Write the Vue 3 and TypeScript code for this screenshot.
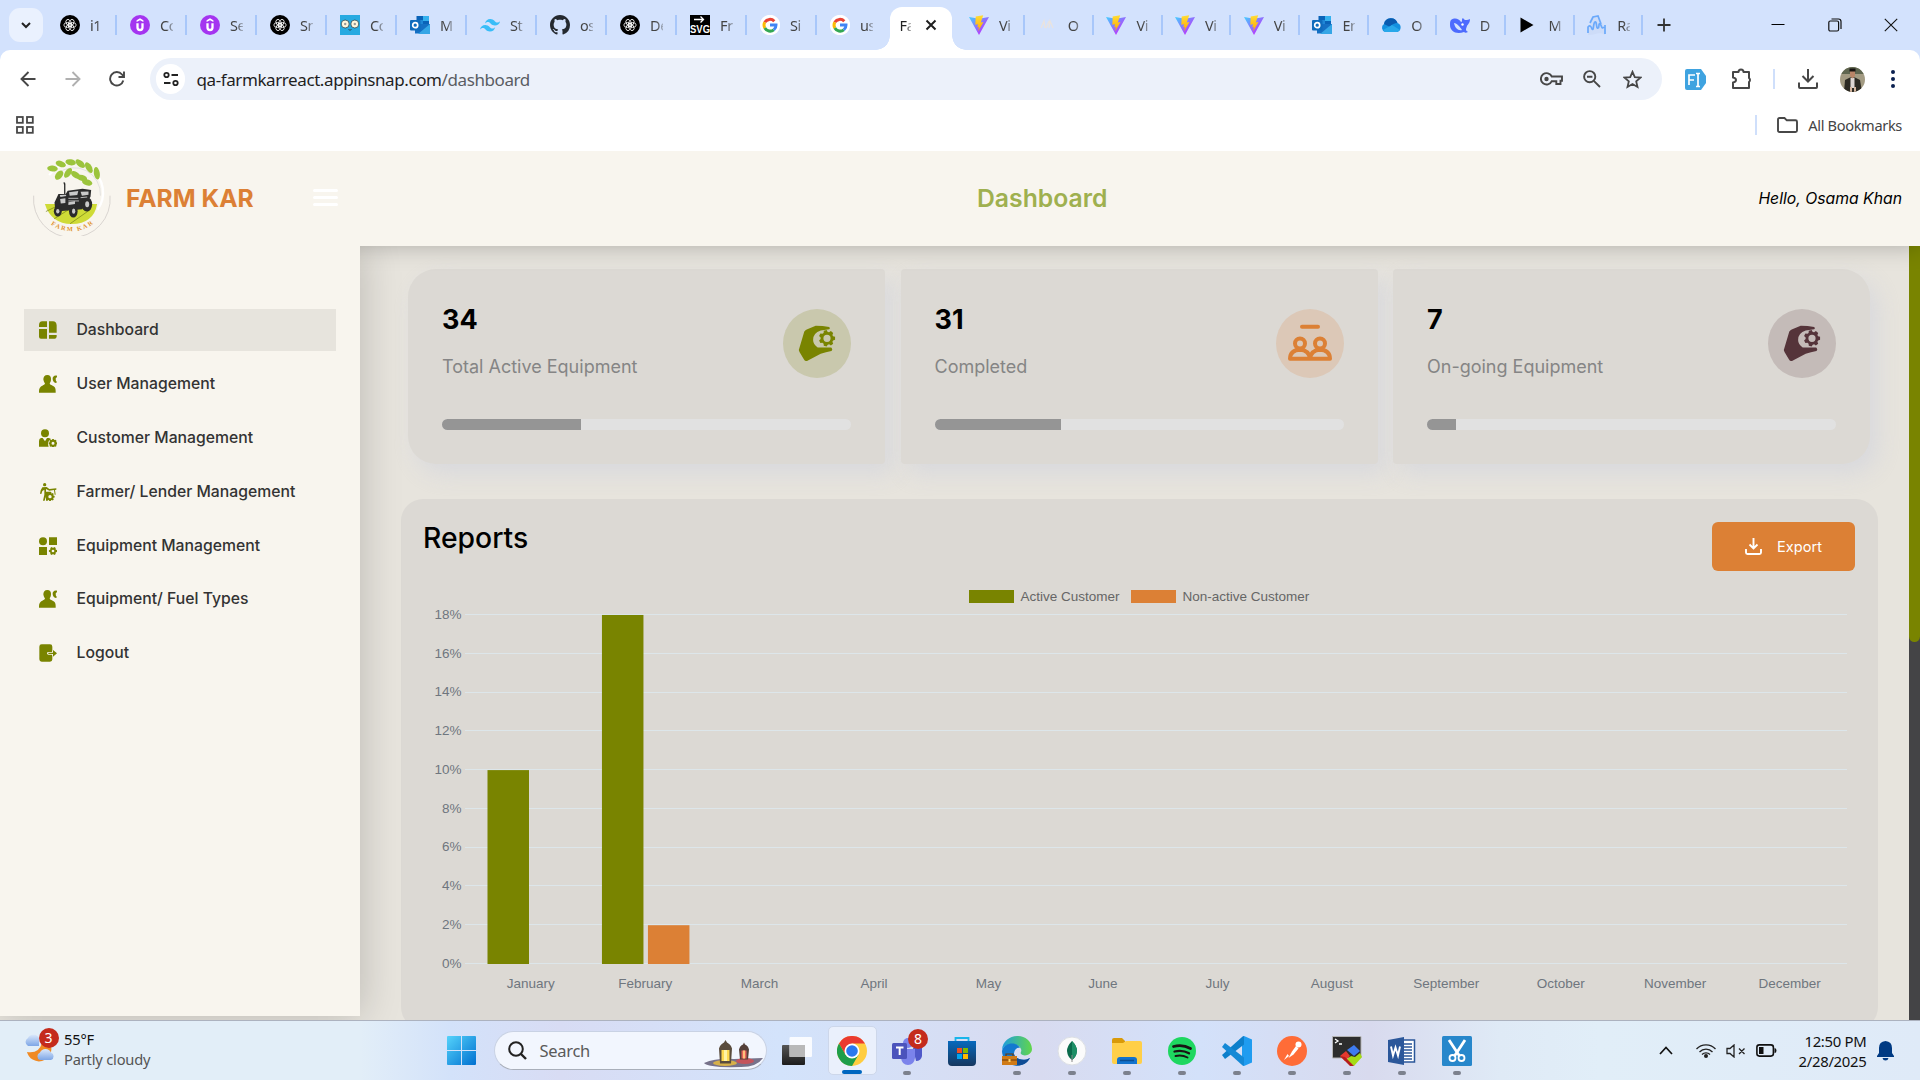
<script setup lang="ts">
interface Tab { icon: string; text: string; bare?: boolean }

function gear(cx: number, cy: number, outer: number, inner: number, hole: number, teeth = 8): string {
  const pts: string[] = []
  for (let i = 0; i < teeth; i++) {
    const a = (i * 2 * Math.PI) / teeth
    const s = Math.PI / teeth
    const at = (r: number, t: number) => `${(cx + r * Math.cos(t)).toFixed(2)} ${(cy + r * Math.sin(t)).toFixed(2)}`
    pts.push(at(inner, a - s * 0.75), at(outer, a - s * 0.4), at(outer, a + s * 0.4), at(inner, a + s * 0.75))
  }
  return `M${pts.join('L')}ZM${cx - hole} ${cy}a${hole} ${hole} 0 1 0 ${hole * 2} 0a${hole} ${hole} 0 1 0 ${-hole * 2} 0Z`
}

const gpt = `<circle cx="10" cy="10" r="10" fill="#000"/><g fill="none" stroke="#fff" stroke-width=".8"><ellipse cx="10" cy="7.6" rx="2.4" ry="3.8" transform="rotate(30 10 10)"/><ellipse cx="10" cy="7.6" rx="2.4" ry="3.8" transform="rotate(90 10 10)"/><ellipse cx="10" cy="7.6" rx="2.4" ry="3.8" transform="rotate(150 10 10)"/><ellipse cx="10" cy="7.6" rx="2.4" ry="3.8" transform="rotate(210 10 10)"/><ellipse cx="10" cy="7.6" rx="2.4" ry="3.8" transform="rotate(270 10 10)"/><ellipse cx="10" cy="7.6" rx="2.4" ry="3.8" transform="rotate(330 10 10)"/></g>`
const outlook = `<rect x="6.5" y="1" width="12.5" height="10" fill="#0a63b8"/><path d="M13 1h6v5h-6z" fill="#35b1ee"/><path d="M7 5h6v5H7z" fill="#1f86d6"/><path d="M5 9h15v9.500H5z" fill="#1570c4"/><path d="M20 9v10H8z" fill="#35a6e6"/><rect y="5" width="10.500" height="10.500" rx="1" fill="#0f6cbd"/><circle cx="5.200" cy="10.200" r="2.500" fill="none" stroke="#fff" stroke-width="1.700"/>`

const favicons: Record<string, string> = {
  gpt,
  outlook,
  udemy: `<circle cx="10" cy="10" r="10" fill="#a435f0"/><path d="M6.600 5.300 10 3.300l3.400 2v1.800L10 5.200 6.600 7.100z" fill="#fff"/><path d="M7.500 8.200v4.300a2.500 2.500 0 0 0 5 0V8.200" fill="none" stroke="#fff" stroke-width="2.300"/>`,
  owl: `<path fill="#27aae1" d="M0 0h20v20H0z"/><circle cx="5.200" cy="9" r="4" fill="#fff6dc" stroke="#2b4754" stroke-width=".8"/><circle cx="14.800" cy="9" r="4" fill="#fff6dc" stroke="#2b4754" stroke-width=".8"/><circle cx="5.200" cy="9" r="1.200" fill="#999"/><circle cx="14.800" cy="9" r="1.200" fill="#999"/><path d="m8.500 14 1.500 1.500 1.500-1.500" fill="none" stroke="#2b4754"/>`,
  tailwind: `<g fill="#38bdf8"><path d="M5 8.500C5.700 5.500 7.500 4 10.200 4c4 0 4.500 3 6.500 3.500 1.300.3 2.500-.2 3.500-1.500-.7 3-2.500 4.500-5.200 4.500-4 0-4.500-3-6.500-3.500C7.200 6.700 6 7.200 5 8.500Z"/><path d="M0 14.500C.7 11.500 2.500 10 5.200 10c4 0 4.500 3 6.500 3.500 1.300.3 2.500-.2 3.500-1.500-.7 3-2.500 4.500-5.200 4.500-4 0-4.500-3-6.500-3.500C2.200 12.700 1 13.200 0 14.500Z"/></g>`,
  github: `<path transform="scale(1.25)" fill="#24292f" d="M8 0C3.580 0 0 3.580 0 8c0 3.540 2.290 6.530 5.470 7.590.4.070.55-.17.55-.38 0-.19-.01-.82-.01-1.490-2.010.37-2.530-.49-2.690-.94-.09-.23-.48-.94-.82-1.130-.28-.15-.68-.52-.01-.53.63-.01 1.080.58 1.230.82.72 1.210 1.870.87 2.330.66.070-.52.280-.87.510-1.070-1.780-.2-3.640-.89-3.640-3.950 0-.87.310-1.590.820-2.150-.08-.2-.36-1.020.08-2.120 0 0 .67-.21 2.200.82.640-.18 1.320-.27 2-.27s1.360.09 2 .27c1.530-1.040 2.200-.82 2.200-.82.440 1.100.160 1.920.080 2.120.510.560.820 1.270.820 2.150 0 3.070-1.870 3.750-3.650 3.950.290.250.540.730.540 1.480 0 1.070-.01 1.930-.01 2.200 0 .21.150.46.550.38A8 8 0 0 0 16 8c0-4.420-3.580-8-8-8Z"/>`,
  svg: `<path d="M0 0h20v20H0z"/><path d="M4 4.500h9M10.500 1.500l3 3-3 3" stroke="#fff" stroke-width="1.300" fill="none"/><text x="10" y="18" text-anchor="middle" textLength="20" lengthAdjust="spacingAndGlyphs" font-family="Liberation Sans" font-weight="700" font-size="10" fill="#fff">SVG</text>`,
  google: `<circle cx="10" cy="10" r="10.200" fill="#fff"/><g fill="none" stroke-width="3"><path d="M14.300 6.300A6 6 0 0 0 4.800 7.200" stroke="#ea4335"/><path d="M4.800 7.200a6 6 0 0 0 0 5.800" stroke="#fbbc05"/><path d="M4.800 13a6 6 0 0 0 9 1.800" stroke="#34a853"/><path d="M13.800 14.800A6 6 0 0 0 16 10h-6" stroke="#4285f4"/></g>`,
  vite: `<defs><linearGradient id="vg" x2="1" y2="1"><stop stop-color="#41d1ff"/><stop offset=".8" stop-color="#bd34fe"/></linearGradient><linearGradient id="vy" x2="0" y2="1"><stop stop-color="#ffdd35"/><stop offset="1" stop-color="#ffa800"/></linearGradient></defs><path d="M0 2 10 20 20 2 10 3.800z" fill="url(#vg)"/><path d="m14.200.2-7.500 1.400L6.300 9.800l2.700-.5-.7 3.200 1.700-.4-1 4.500 5.500-9.500-2.700.5z" fill="url(#vy)"/>`,
  faint: `<path d="m3 13 3-7 1 7M8 13l3-7M11 13l1-7 3 7" fill="none" stroke="#e9e3df" stroke-width="1.300"/>`,
  cloud: `<path d="M4 17a4.500 4.500 0 0 1-1-8 7 7 0 0 1 13.500-1 4.700 4.700 0 0 1-.5 9Z" fill="#1490df"/><path d="M3 9a7 7 0 0 1 13.500-1c-3 0-5.500 1-7.500 4Z" fill="#0a5bb0"/><path d="m2 15 9-5 8 5-3 2H4z" fill="#28a8ea"/>`,
  whale: `<path d="M1 5c4-3 8-1 10 2 2 0 0-3 2-4 1 2 3 3 7 1 0 4-2 5-3 7-1 3-2 4 1 6-2 1-3 1-4 0C6 20 0 16 0 10c0-2 0-4 1-5Z" fill="#4d6bfe"/><path d="M4 8c3 0 6 4 8 7-4 1-7-2-8-7Z" fill="#d3e2fd"/><circle cx="12.500" cy="9.500" r="1.200" fill="#fff"/>`,
  play: `<path d="M1.500 2.500v15L14.500 10z" fill="#000"/>`,
  wave: `<path d="M1 20V11l3-3-1-3 3-4 6 0 3 7 3 5v7c-5-4-10 0-17 0Z" fill="#cddcf8"/><path d="M1 18V12c2-2 3-1 4 2 2 2 1-6 3-7s1 7 3 6 0-5 2-4 1 6 4 3M3 8l3-6 5-1 3 8M18 10v9" fill="none" stroke="#6aa9fb" stroke-width="1.700"/>`,
}

const leftTabs: Tab[] = [
  { icon: 'gpt', text: 'i1' }, { icon: 'udemy', text: 'Co' }, { icon: 'udemy', text: 'Se' }, { icon: 'gpt', text: 'Sn' },
  { icon: 'owl', text: 'Co' }, { icon: 'outlook', text: 'M' }, { icon: 'tailwind', text: 'St' }, { icon: 'github', text: 'os' },
  { icon: 'gpt', text: 'De' }, { icon: 'svg', text: 'Fr' }, { icon: 'google', text: 'Si' }, { icon: 'google', text: 'us', bare: true },
]
const rightTabs: Tab[] = [
  { icon: 'vite', text: 'Vi' }, { icon: 'faint', text: 'O' }, { icon: 'vite', text: 'Vi' }, { icon: 'vite', text: 'Vi' }, { icon: 'vite', text: 'Vi' },
  { icon: 'outlook', text: 'En' }, { icon: 'cloud', text: 'O' }, { icon: 'whale', text: 'D' }, { icon: 'play', text: 'M' }, { icon: 'wave', text: 'Ra' },
]

const userIcon = `<path d="M25 0c8 0 12 6 11 13 0 6-2 9-4 12 1 4 3 5 9 7 6 2 9 6 9 16v5H0v-5c0-9 4-13 10-16 5-2 7-3 8-7-3-3-4-7-5-12C13 6 17 0 25 0Z"/><path d="M54 2c-9-2-14 4-13 11 1 6 3 9 8 11 2-1 5-1 5-3l-3-3c-1-6-2-9 3-11Z"/>`
const menu = [
  { label: 'Dashboard', icon: `<path d="M10 1h14v17H0v-5Q0 1 10 1ZM0 24h24v29H6q-6 0-6-6ZM30 1h12q10 0 11 12v22H30ZM30 42h23v5q-1 6-6 6H30Z"/>` },
  { label: 'User Management', icon: userIcon },
  { label: 'Customer Management', icon: `<circle cx="18" cy="13" r="12"/><path d="M6 27h5l7 10 6-10h5q6 1 7 4-8 3-9 12 0 5 2 10H0V36q0-7 6-9Z"/><path fill-rule="evenodd" d="${gear(42, 43, 13, 11, 4.5)}"/>` },
  { label: 'Farmer/ Lender Management', icon: `<circle cx="17" cy="5" r="5"/><path d="m10 13 13-1 8 6 21-2v4l-4 1 2 14h-3l-2-14-14 2-10-5v8h14l4 5q-12-1-13 7v15h-5V39l-4 14h-5l4-18V20l-6 4-3 9-4-1 2-10Z"/><path fill-rule="evenodd" d="${gear(33, 41, 14, 11, 5)}"/>` },
  { label: 'Equipment Management', icon: `<circle cx="12" cy="13" r="12"/><path d="M30 1h24v23H30ZM0 30h24v24H0Z"/><path fill-rule="evenodd" d="${gear(42, 42, 12.5, 9.5, 4, 6)}"/>` },
  { label: 'Equipment/ Fuel Types', icon: userIcon },
  { label: 'Logout', icon: `<path d="M8 1h25q7 0 7 7v11l-1 5H28q-4 0-4 4t4 4h11l1 5v9q0 7-7 7H8q-7 0-7-7V8q0-7 7-7Z"/><path d="M28 26h14v-8l12 10-12 10v-8H28Z"/>` },
]

const hand = `<path d="m15.800 41 5.500-18.500q1.500-2 3-2.200l8.400-3.500q7 0 13.500 1.200 1.500 1.500 0 2.200l-8.500 1.300q-7.700 2.500-7.600 9.500 0 4 4.600 7.500l13.500 0q2 2.200.2 3.400-5.500 1.200-10.700 2.800L24 52q-2 .5-3-1.500l-4.500-7.500Z"/><path fill-rule="evenodd" d="${gear(44, 29.3, 8.2, 6.4, 3.6, 7)}"/>`
const people = `<g fill="none" stroke="#dc8035" stroke-width="4" stroke-linejoin="round" stroke-linecap="round"><path d="M26 17.800h16"/><circle cx="24" cy="34.500" r="5"/><circle cx="44" cy="34.500" r="5"/><path d="M14 49.700q.2-8.600 10-9 9 .4 10 9zM34 49.700q1-8.600 10-9 9.800.4 10 9z"/></g>`
const stats = [
  { value: '34', label: 'Total Active Equipment', pct: 34, icon: hand, fill: '#798400', tint: '#c9c8ad' },
  { value: '31', label: 'Completed', pct: 31, icon: people, fill: '#dc8035', tint: '#dcc8b7' },
  { value: '7', label: 'On-going Equipment', pct: 7, icon: hand, fill: '#55343a', tint: '#c4bbb8' },
]

const months = ['January', 'February', 'March', 'April', 'May', 'June', 'July', 'August', 'September', 'October', 'November', 'December']
const active = [10, 18, 0, 0, 0, 0, 0, 0, 0, 0, 0, 0]
const inactive = [0, 2, 0, 0, 0, 0, 0, 0, 0, 0, 0, 0]
const ticks = [18, 16, 14, 12, 10, 8, 6, 4, 2, 0]
const step = 114.45
const plotLeft = 49.5
const base = 384
const unit = 19.39
const yOf = (v: number) => base - v * unit

interface DockApp { name: string; svg: string; running?: boolean; current?: boolean; badge?: string }
const apps: DockApp[] = [
  { name: 'views', svg: `<defs><linearGradient id="tv" x2="0" y2="1"><stop stop-color="#555"/><stop offset="1" stop-color="#1c1c1c"/></linearGradient></defs><rect x="0" y="9" width="23" height="20" rx="1" fill="url(#tv)"/><rect x="7.500" y="1" width="22.500" height="20" rx="1" fill="#fff" opacity=".85"/><rect x="7.500" y="9" width="15.500" height="12" fill="#b9b9b9"/>` },
  { name: 'chrome', current: true, svg: `<circle cx="15" cy="15" r="15" fill="#ffcd40"/><path d="M2 7.500A15 15 0 0 1 28 7.500H15L8.500 18.700Z" fill="#ea3a30"/><path d="M2 7.500A15 15 0 0 0 15 30l6.500-11.200L8.500 18.700Z" fill="#1e9e4a"/><circle cx="15" cy="15" r="7.500" fill="#fff"/><circle cx="15" cy="15" r="5.800" fill="#2a78ee"/>` },
  { name: 'teams', running: true, badge: '8', svg: `<circle cx="16" cy="7" r="5" fill="#7b83eb"/><circle cx="26" cy="9" r="3.500" fill="#5059c9"/><path d="M21 12h9v8q-1 5-6 5Z" fill="#5059c9"/><path d="M9 13h14v9q-1 7-7 7t-7-7Z" fill="#7b83eb"/><rect x="0" y="7" width="15" height="16" rx="1.500" fill="#4b53bc"/><path d="M4 11.500h7.500M7.700 11.500V19" stroke="#fff" stroke-width="2"/>` },
  { name: 'store', svg: `<defs><linearGradient id="st" x2="0" y2="1"><stop stop-color="#0669bd"/><stop offset="1" stop-color="#16375f"/></linearGradient></defs><path d="M8.500 7V2h13v5" fill="none" stroke="#19b5ea" stroke-width="1.800"/><path d="M1 5h28v21q0 4-4 4H5q-4 0-4-4Z" fill="url(#st)"/><path fill="#f25022" d="M10 12h5v5h-5z"/><path fill="#7fba00" d="M16 12h5v5h-5z"/><path fill="#00a4ef" d="M10 18h5v5h-5z"/><path fill="#ffb900" d="M16 18h5v5h-5z"/>` },
  { name: 'edge', running: true, svg: `<defs><linearGradient id="eg"><stop stop-color="#1e9de0"/><stop offset="1" stop-color="#62d64a"/></linearGradient></defs><path d="M0 14C1-4 29-5 30 13c0 6-8 8-11 5-1-2 1-2 0-5-3-7-16-6-19 1Z" fill="url(#eg)"/><path d="M0 15C2 6 15 5 18 12c-4-1-6 3-6 6 1 5 9 8 16 4-6 10-20 10-25 1Q0 20 0 15Z" fill="#1379cf"/><path d="M12 18c1 5 9 8 16 4-4 8-12 8-16 7Z" fill="#0e4c94"/><path d="M0 20h15v9H0Z" fill="#d07b17"/><path d="M4 20v-2h7v2M0 24h15" fill="none" stroke="#6b3a0b" stroke-width="1.200"/><path d="M6.500 23h2v3h-2z" fill="#ffd467"/>` },
  { name: 'compass', running: true, svg: `<circle cx="15" cy="15" r="14" fill="#fbfbfb" stroke="#dcdfe4"/><path d="M15 5q5 5 5 10-.5 6-5 9-4.500-3-5-9 0-5 5-10Z" fill="#0b6b4c"/><path d="M15 5q5 5 5 10-.5 6-5 9Z" fill="#1d8f66"/><path d="M15 19v7" stroke="#888"/>` },
  { name: 'files', running: true, svg: `<path d="M0 4q0-2 2-2h8l3 3v5H0Z" fill="#d99a09"/><path d="M0 7h11l3-2h14q2 0 2 2v19q0 2-2 2H2q-2 0-2-2Z" fill="#ffcf48"/><path d="M5 28v-4q0-3 3-3h14q3 0 3 3v4Z" fill="#1373cd"/><path d="M8 24.500h14" stroke="#0b4e92" stroke-width="1.500"/>` },
  { name: 'spotify', running: true, svg: `<circle cx="15" cy="15" r="14" fill="#1ed760"/><g fill="none" stroke="#191414" stroke-linecap="round"><path d="M6.500 10.500q9-2.500 17 2" stroke-width="2.800"/><path d="M7.500 15.500q8-2 14.500 1.800" stroke-width="2.300"/><path d="M8.500 20q6.500-1.500 12 1.500" stroke-width="1.900"/></g>` },
  { name: 'code', running: true, svg: `<path d="m22 0 8 3.500v23L22 30l-2-1V1Z" fill="#1f9cf0"/><path d="M20 1 0 19l3 4L22 8.500V0Z" fill="#0d7fcb"/><path d="M20 29 0 11l3-4 19 14.500V30Z" fill="#1489d6"/>` },
  { name: 'postman', running: true, svg: `<circle cx="15" cy="15" r="15" fill="#ff6c37"/><g fill="#fff"><circle cx="21.500" cy="8.500" r="3"/><path d="m19 10 2.500 2.500-5 6-5 3.500 3.500-6.500Z"/><path d="m12 20-5 4 3.500-6z"/></g>` },
  { name: 'terminal', running: true, svg: `<path d="M.5.500h28.500v21.500H.5z" fill="#2d2d2d" stroke="#b5b5b5"/><path d="m3 3 3 2-3 2M7 8h3" stroke="#fff" fill="none" stroke-width="1.300"/><path d="m8 20 6-5 4 5-5 5z" fill="#e5392f"/><path d="m15 14 7-5 6 6-6 5z" fill="#3e7bf0"/><path d="m14 24 5-4 4 1 5-4 2 4-8 9z" fill="#a4dc16"/><path d="m8 20 5 5 5 5 4 0-9-9z" fill="#b51d1d"/>` },
  { name: 'word', running: true, svg: `<path d="M15 4h12.500v22H15z" fill="#fff" stroke="#2b579a" stroke-width="1.500"/><path d="M17 8h8M17 11h8M17 14h8M17 17h8M17 20h8M17 23h8" stroke="#2b579a" stroke-width="1.300"/><path d="M1 4 17 1v28L1 26Z" fill="#2b579a"/><path d="m4 10.500 2 9 2.500-8 2.500 8 2-9" fill="none" stroke="#fff" stroke-width="1.900"/>` },
  { name: 'snip', running: true, svg: `<rect width="30" height="30" rx="1.500" fill="#2787cb"/><path d="m7 4 10.500 16M23 4 12.500 20" stroke="#fff" stroke-width="2.800"/><circle cx="10.500" cy="22" r="3" fill="none" stroke="#fff" stroke-width="1.800"/><circle cx="19.500" cy="22" r="3" fill="none" stroke="#fff" stroke-width="1.800"/>` },
]
const leaves = [
  [155, 70, 16, 9, 5], [180, 56, 16, 9, 20], [210, 51, 16, 9, 10], [239, 55, 17, 9, 40], [265, 67, 18, 9, 60], [289, 84, 19, 9, 80],
  [175, 90, 16, 10, -50], [202, 83, 17, 9, -55], [225, 89, 16, 9, 35], [244, 98, 16, 9, 15], [260, 112, 16, 9, 15],
]
</script>

<template>
  <div class="screen">
    <div class="tabstrip">
      <div class="tabsearch"><svg width="12" height="12" viewBox="0 0 12 12"><path d="m2 4 4 4 4-4" fill="none" stroke="#222" stroke-width="2" /></svg></div>
      <div class="tabs-left">
        <div v-for="(t, i) in leftTabs" :key="i" class="tab" :class="{ bare: t.bare }">
          <svg class="fav" viewBox="0 0 20 20" v-html="favicons[t.icon]"></svg><span class="tabtext">{{ t.text }}</span>
        </div>
      </div>
      <div class="tab-active">
        <span class="tabtext">Fa</span>
        <svg width="12" height="12" viewBox="0 0 12 12"><path d="m1.500 1.500 9 9m0-9-9 9" stroke="#1f1f1f" stroke-width="2" /></svg>
      </div>
      <div class="tabs-right">
        <div v-for="(t, i) in rightTabs" :key="i" class="tab narrow">
          <svg class="fav" viewBox="0 0 20 20" v-html="favicons[t.icon]"></svg><span class="tabtext">{{ t.text }}</span>
        </div>
      </div>
      <svg class="plus" width="14" height="14" viewBox="0 0 14 14"><path d="M7 .5v13M.5 7h13" stroke="#333" stroke-width="1.800" /></svg>
      <div class="winbtns">
        <svg width="14" height="14" viewBox="0 0 14 14"><path d="M.5 6.500h13" stroke="#000" stroke-width="1" /></svg>
        <svg width="14" height="14" viewBox="0 0 14 14"><g fill="none" stroke="#111" stroke-width="1.200"><rect x=".8" y="3" width="9.800" height="10" rx="1.500" /><path d="M3.500 1h7q2.500 0 2.500 2.500V11" /></g></svg>
        <svg width="14" height="14" viewBox="0 0 14 14"><path d="m.8.800 12.400 12.400m0-12.400L.8 13.200" stroke="#111" stroke-width="1.100" /></svg>
      </div>
    </div>

    <div class="browser">
      <div class="toolbar">
        <svg class="nav" viewBox="0 0 16 16"><path d="M15.500 8H1.500m7-7-7 7 7 7" /></svg>
        <svg class="nav off" viewBox="0 0 16 16"><path d="M.5 8h14m-7-7 7 7-7 7" /></svg>
        <svg class="nav" viewBox="0 0 16 16"><path d="M14.300 9.500A6.700 6.700 0 1 1 13 3.500L15 6M15 .5V6H9.500" /></svg>
        <div class="address">
          <div class="siteinfo"><svg width="16" height="16" viewBox="0 0 16 16"><g fill="none" stroke="#222" stroke-width="1.800"><circle cx="3.500" cy="4" r="2.200" /><circle cx="12.500" cy="12" r="2.200" /><path d="M8.500 4H15M1 12h6.500" /></g></svg></div>
          <span class="url">qa-farmkarreact.appinsnap.com<i>/dashboard</i></span>
          <svg class="key" width="24" height="16" viewBox="0 0 24 16"><g fill="none" stroke="#474747" stroke-width="1.900"><path d="M11.800 5.500H22v4.200h-1.500V13h-4.200v-2.800h-4.500A5.700 5.700 0 1 1 11.800 5.500Z" /></g><circle cx="6.500" cy="8" r="2.200" fill="#474747" /></svg>
          <svg width="18" height="18" viewBox="0 0 18 18"><g fill="none" stroke="#474747" stroke-width="1.900"><circle cx="6.700" cy="6.700" r="5.600" /><path d="m10.800 10.800 6.200 6.200M4 6.700h5.400" /></g></svg>
          <svg class="star" width="19" height="19" viewBox="0 0 19 19"><path d="m9.500 1.800 2.300 5.300 5.700.5-4.300 3.800 1.300 5.600-5-3-5 3 1.300-5.600L1.500 7.600l5.700-.5Z" fill="none" stroke="#474747" stroke-width="1.800" /></svg>
        </div>
        <div class="exts">
          <svg width="21" height="21" viewBox="0 0 21 21"><path d="M2 0h14l5 7v7l-5 7H2q-2 0-2-2V2q0-2 2-2Z" fill="#3fa3e0" /><path d="M4 16V6h6M4 11h5M11 4.500h4m0 13h-4m2-13v13" fill="none" stroke="#fff" stroke-width="1.700" /></svg>
          <svg class="puzzle" width="22" height="22" viewBox="0 0 22 22"><path d="M2 4h5.500a2.500 2.500 0 0 1 5 0H18v6a2.500 2.500 0 0 1 0 4v6H2v-5.500q3-.5 3-2.500T2 9.500Z" fill="none" stroke="#474747" stroke-width="2" stroke-linejoin="round" /></svg>
          <i class="vsep"></i>
          <svg class="dl" width="20" height="20" viewBox="0 0 20 20"><path d="M10 0v12M4.500 7l5.500 5.500L15.500 7M1 13.500V18q0 1 1 1h16q1 0 1-1v-4.500" fill="none" stroke="#474747" stroke-width="2" /></svg>
          <svg class="avatar" width="25" height="25" viewBox="0 0 25 25"><defs><clipPath id="av"><circle cx="12.500" cy="12.500" r="12.500" /></clipPath></defs><g clip-path="url(#av)"><path fill="#a39b83" d="M0 0h25v25H0z" /><path d="M0 0h25v7H0z" fill="#5f6650" /><path d="m5 13 5-2.500h5L20 13l2 12H4z" fill="#2d2b24" /><path d="M10.500 11h4v10h-4z" fill="#ddd6d3" /><path d="M10 4h5v5l-2.500 2.500L10 9z" fill="#b98568" /><path d="M9.500 1.500h6v3h-6z" fill="#171310" /><path d="M10 20h2v5h-2zM14 20h2v5h-2z" fill="#d4b6a0" /></g></svg>
          <svg class="dots" width="4" height="18" viewBox="0 0 4 18"><g fill="#0b2050"><circle cx="2" cy="2" r="2" /><circle cx="2" cy="9" r="2" /><circle cx="2" cy="16" r="2" /></g></svg>
        </div>
      </div>
      <div class="bookmarks">
        <svg width="18" height="18" viewBox="0 0 18 18"><g fill="none" stroke="#474747" stroke-width="1.800"><rect x="1" y="1" width="5.800" height="5.800" /><rect x="11" y="1" width="5.800" height="5.800" /><rect x="1" y="11" width="5.800" height="5.800" /><rect x="11" y="11" width="5.800" height="5.800" /></g></svg>
        <div class="allbm">
          <i class="vsep"></i>
          <svg width="21" height="16" viewBox="0 0 21 16"><path d="M1 2.500Q1 1 2.500 1h5l2.300 2.300h8.700q1.500 0 1.500 1.500v8.700q0 1.500-1.500 1.500h-16Q1 15 1 13.500Z" fill="none" stroke="#474747" stroke-width="1.900" /></svg>
          <span>All Bookmarks</span>
        </div>
      </div>
    </div>

    <header class="apphead">
      <div class="brand">
        <svg class="logo" viewBox="96 38 236 236">
          <path d="M98 152A116 116 0 1 0 329 152" fill="none" stroke="#d2cdca" stroke-width="2.500" />
          <path d="M145 90A86 86 0 1 1 291 195" fill="none" stroke="#fff" stroke-width="7" /><path d="M170 85A80 80 0 0 1 300 152" fill="none" stroke="#d8d8d8" stroke-width="2" />
          <path d="M132 177H290Q280 236 213 238 150 236 132 177Z" fill="#cfdb37" />
          <path d="m135 200 45-22M160 222l60-38M208 237l60-42" stroke="#6f7c13" stroke-width="2" />
          <g fill="#9cc43c"><ellipse v-for="(l, i) in leaves" :key="i" :cx="l[0]" :cy="l[1]" :rx="l[2]" :ry="l[3]" :transform="`rotate(${l[4]} ${l[0]} ${l[1]})`" /></g>
          <g fill="#2b2b2b"><path d="M173 147h22l6-10 45-6 26 4-2 20-25 38-70 6-12-8-2-18Z" /><path d="M188 112q6-2 6 5v33h-4v-30Z" /><ellipse cx="259" cy="178" rx="16" ry="22" /><ellipse cx="218" cy="199" rx="13" ry="19" /><ellipse cx="171" cy="199" rx="12" ry="16" /></g>
          <g fill="#c9c9c9"><ellipse cx="260" cy="178" rx="6" ry="9" /><ellipse cx="219" cy="199" rx="5" ry="8" /><ellipse cx="171" cy="199" rx="5" ry="7" /><path d="m177 150 18-1 2 4-18 3zM205 142l28-4-3 12-23 2zM240 140l24-1v10l-20 3zM178 162l16-2v14l-14 2zM203 172l20-3v8l-20 3z" /></g>
          <path d="M203 160h30M203 168h32M240 158l20-2" stroke="#fff" stroke-width="2" />
          <path id="ring" d="M132 222A106 106 0 0 0 294 222" fill="none" />
          <text font-family="Liberation Serif" font-weight="700" font-size="19" fill="#e0922b" letter-spacing="5"><textPath href="#ring" startOffset="52%" text-anchor="middle">FARM KAR</textPath></text>
        </svg>
        <span class="name">FARM KAR</span>
        <div class="burger"><i></i><i></i><i></i></div>
      </div>
      <h1>Dashboard</h1>
      <span class="hello">Hello, Osama Khan</span>
    </header>

    <div class="body">
      <nav class="side">
        <a v-for="(m, i) in menu" :key="m.label" :class="{ on: i === 0 }">
          <svg viewBox="0 0 54 54" v-html="m.icon"></svg><span>{{ m.label }}</span>
        </a>
      </nav>
      <main>
        <section class="stats">
          <article v-for="s in stats" :key="s.label">
            <div class="top">
              <div><strong>{{ s.value }}</strong><p>{{ s.label }}</p></div>
              <svg class="badge" viewBox="0 0 68 69" preserveAspectRatio="none" :fill="s.fill"><ellipse cx="34" cy="34.500" rx="34" ry="34.500" :fill="s.tint" /><g v-html="s.icon"></g></svg>
            </div>
            <div class="bar"><i :style="{ width: s.pct + '%' }"></i></div>
          </article>
        </section>
        <section class="reports">
          <div class="rhead">
            <h2>Reports</h2>
            <button><svg width="17" height="17" viewBox="0 0 17 17"><path d="M8.500 0v10.500M4.500 6.500l4 4 4-4M1 11v3.500q0 1.500 1.500 1.500h12q1.500 0 1.500-1.500V11" fill="none" stroke="#fff" stroke-width="1.900" /></svg>Export</button>
          </div>
          <svg class="chart" width="1424" height="430" viewBox="0 0 1424 430">
            <g class="legend">
              <rect x="545" y="10" width="45" height="13" fill="#798400" /><text x="596.500" y="21">Active Customer</text>
              <rect x="707" y="10" width="45" height="13" fill="#dc8035" /><text x="758.500" y="21">Non-active Customer</text>
            </g>
            <g v-for="t in ticks" :key="t">
              <path :d="`M41 ${Math.round(yOf(t)) - 0.5}H1423`" stroke="#dde6ea" />
              <text x="37.500" :y="yOf(t) + 3.800" text-anchor="end">{{ t }}%</text>
            </g>
            <g v-for="(m, i) in months" :key="m">
              <rect v-if="active[i]" :x="plotLeft + i * step + 14" :y="yOf(active[i])" width="41.500" :height="active[i] * unit" fill="#798400" />
              <rect v-if="inactive[i]" :x="plotLeft + i * step + 60" :y="yOf(inactive[i])" width="41.500" :height="inactive[i] * unit" fill="#dc8035" />
              <text :x="plotLeft + (i + 0.5) * step" y="408" text-anchor="middle">{{ m }}</text>
            </g>
          </svg>
        </section>
      </main>
      <div class="scroll"><i></i></div>
    </div>

    <footer class="taskbar">
      <div class="weather">
        <svg width="31" height="35" viewBox="0 0 31 35"><defs><linearGradient id="cl" x2="0" y2="1"><stop stop-color="#dce9fb" /><stop offset="1" stop-color="#7ea6e6" /></linearGradient></defs><path d="M4 19a4.500 4.500 0 0 1 0-8 6 6 0 0 1 11 0v8Z" fill="url(#cl)" /><path d="M27 19A12 12 0 1 1 3 25q12 2 15-9 4 0 9 3Z" fill="#f08a24" /><path d="M16 33a4 4 0 0 1 0-7.500 6 6 0 0 1 11 0 4 4 0 0 1 0 7.500Z" fill="url(#cl)" /></svg>
        <span class="count">3</span>
        <div class="wtext"><b>55°F</b><span>Partly cloudy</span></div>
      </div>
      <div class="dock">
        <svg class="start" width="29" height="29" viewBox="0 0 29 29"><defs><linearGradient id="wn" x2="1" y2="1"><stop stop-color="#55d3fb" /><stop offset="1" stop-color="#0070d0" /></linearGradient></defs><path d="M1 0h13v14H0V1q0-1 1-1ZM15 0h13q1 0 1 1v13H15ZM0 15h14v14H1q-1 0-1-1ZM15 15h14v13q0 1-1 1H15Z" fill="url(#wn)" /></svg>
        <div class="search">
          <svg width="19" height="19" viewBox="0 0 19 19"><circle cx="8" cy="8" r="6.800" fill="none" stroke="#222" stroke-width="2" /><path d="m12.500 12.500 5.500 5.500" stroke="#222" stroke-width="2.400" /></svg>
          <span>Search</span>
          <svg class="lamps" width="59" height="28" viewBox="0 0 59 28"><path d="M0 23q12-5 30-4l29-1q-6 9-22 9Q4 28 0 23Z" fill="#77728a" /><ellipse cx="21" cy="23" rx="12" ry="3" fill="#d6b04a" /><ellipse cx="41" cy="21" rx="9" ry="3" fill="#c4545c" /><path d="m21.500 0 1.500 2.500q4 2 5 6l-1 15H16l-1-15q1-4 5-6Z" fill="#5a4c3d" /><path d="M17.500 10h8v11h-8z" fill="#ffd950" /><path d="M20 10h3v11h-3z" fill="#fff3a5" /><path d="m40 2.500 1 2q3 1 4 5l-1 10h-8l-1-10q1-4 4-5Z" fill="#544039" /><path d="M37.500 10.500h5v8h-5z" fill="#e8645a" /><path d="M39 10.500h2v8h-2z" fill="#ffc07a" /></svg>
        </div>
        <div v-for="a in apps" :key="a.name" class="app" :class="{ current: a.current, running: a.running }">
          <svg width="30" height="30" viewBox="0 0 30 30" v-html="a.svg"></svg>
          <span v-if="a.badge" class="count">{{ a.badge }}</span>
        </div>
      </div>
      <div class="tray">
        <svg width="14" height="9" viewBox="0 0 14 9"><path d="m1 8 6-6.500L13 8" fill="none" stroke="#111" stroke-width="1.700" /></svg>
        <svg class="wifi" width="20" height="15" viewBox="0 0 20 15"><g fill="none" stroke="#222" stroke-width="1.300"><path d="M.5 6a13 13 0 0 1 19 0M3.500 9a9 9 0 0 1 13 0M6 11.500a5.600 5.600 0 0 1 8 0" /></g><circle cx="10" cy="13" r="2" fill="#222" /></svg>
        <svg class="vol" width="20" height="14" viewBox="0 0 20 14"><path d="M1 4.500h3L8 1v12L4 9.500H1ZM13 4.500l5.500 5.500m0-5.500L13 10" fill="none" stroke="#222" stroke-width="1.300" /></svg>
        <svg class="bat" width="21" height="13" viewBox="0 0 21 13"><rect x=".9" y=".9" width="16.500" height="11.200" rx="2.500" fill="none" stroke="#111" stroke-width="1.600" /><path d="M3 3h4.500v7H3zM18.500 4q2 0 2 2.500t-2 2.500z" fill="#111" /></svg>
        <div class="clock"><span>12:50 PM</span><span>2/28/2025</span></div>
        <svg class="bell" width="17" height="20" viewBox="0 0 17 20"><path d="M8.500 0Q15 .5 15 7v5l2 3v1H0v-1l2-3V7Q2 .5 8.500 0ZM5.500 17h6q-.5 2.500-3 2.500t-3-2.500Z" fill="#003a83" /></svg>
      </div>
    </footer>
  </div>
</template>

<style>
body { margin: 0; background: #e7e4dd; }
</style>

<style scoped>
* { box-sizing: border-box; }
svg { display: block; flex: none; }
.screen { width: 1920px; height: 1080px; display: flex; flex-direction: column; overflow: hidden; font-family: Inter, sans-serif; }
.tabstrip { height: 50px; flex: none; background: #d3e2fd; display: flex; align-items: center; font: 15px "Noto Sans", sans-serif; color: #444; }
.tabsearch { width: 34px; height: 34px; margin-left: 8.500px; margin-right: 4px; border-radius: 11px; background: #eaf1fe; display: flex; align-items: center; justify-content: center; }
.tabs-left, .tabs-right { display: flex; }
.tab { width: 70px; height: 20px; display: flex; align-items: center; padding-left: 13.500px; border-right: 2px solid #a8c7fa; }
.tab.bare { border-color: transparent; }
.tab.narrow { width: 68.700px; padding-left: 12.500px; }
.fav { width: 20px; height: 20px; }
.tabtext { width: 13px; margin-left: 10px; overflow: hidden; white-space: nowrap; line-height: 22px; font-size: 14.500px; letter-spacing: -.4px; mask-image: linear-gradient(90deg, #000 50%, rgba(0, 0, 0, .3)); }
.tab-active { position: relative; width: 62px; height: 43px; margin-left: 3px; align-self: flex-end; background: #fff; border-radius: 12px 12px 0 0; display: flex; align-items: center; color: #222; padding-bottom: 7px; }
.tab-active::before, .tab-active::after { content: ""; position: absolute; bottom: 0; width: 14px; height: 14px; }
.tab-active::before { left: -14px; background: radial-gradient(circle at 0 0, transparent 13.500px, #fff 14px); }
.tab-active::after { right: -14px; background: radial-gradient(circle at 100% 0, transparent 13.500px, #fff 14px); }
.tab-active .tabtext { width: 11px; margin: 0 14px 0 10px; }
.tabs-right { margin-left: 5px; }
.plus { margin-left: 14px; }
.winbtns { margin-left: auto; display: flex; gap: 42.500px; padding-right: 22px; }
.browser { height: 101px; flex: none; background: linear-gradient(#d3e2fd 20px, #fff 20px); }
.toolbar { height: 50px; padding-top: 8px; border-radius: 10px 10px 0 0; background: #fff; display: flex; align-items: center; }
.nav { width: 16px; height: 16px; margin: 0 0 1px 20px; fill: none; stroke: #474747; stroke-width: 1.900; }
.nav.off { stroke: #b0b0b0; margin-left: 28.500px; }
.nav.off + .nav { margin-left: 28.500px; }
.address { margin-left: 25px; width: 1512px; height: 42px; border-radius: 21px; background: #ecf1fa; display: flex; align-items: center; padding: 0 20px 0 6px; }
.siteinfo { width: 29px; height: 30px; border-radius: 15px; background: #fff; display: flex; align-items: center; justify-content: center; }
.url { margin-left: 11.500px; flex: 1; font: 17px "Noto Sans", sans-serif; color: #1f1f1f; letter-spacing: -.41px; }
.url i { font-style: normal; color: #5a5d63; }
.key { margin-right: 19px; }
.star { margin-left: 22px; }
.exts { display: flex; align-items: center; margin-left: 23px; }
.puzzle { margin-left: 25px; }
.vsep { width: 2px; height: 20px; background: #cfdffb; }
.exts .vsep { margin-left: 20px; }
.dl { margin-left: 22.500px; }
.avatar { margin-left: 22px; }
.dots { margin-left: 26px; }
.bookmarks { height: 51px; background: #fff; display: flex; align-items: center; justify-content: space-between; padding: 0 18px 1px 15.500px; }
.allbm { display: flex; align-items: center; font: 14.600px "Noto Sans", sans-serif; color: #444; letter-spacing: -.35px; }
.allbm svg { margin: 0 10px 0 20px; }
.apphead { position: relative; z-index: 2; height: 95px; flex: none; padding-bottom: 2px; background: #f8f5ee; display: flex; align-items: center; box-shadow: 0 0 22px rgba(0, 0, 0, .25); clip-path: inset(0 0 -40px 0); }
.brand { width: 360px; display: flex; align-items: center; }
.logo { width: 78px; height: 78px; margin-left: 32.500px; margin-top: -1px; }
.name { margin-left: 15.500px; width: 187px; font-weight: 700; font-size: 24.600px; color: #dc8035; white-space: nowrap; }
.burger { display: flex; flex-direction: column; gap: 4px; }
.burger i { width: 25px; height: 3px; border-radius: 2px; background: #fff; }
h1 { margin: 0 0 0 617px; font-size: 24.750px; font-weight: 600; color: #9fb04f; }
.hello { margin-left: auto; margin-right: 18px; padding-top: 1px; font-size: 15.750px; font-style: italic; font-weight: 400; color: #000; }
.body { height: 774px; flex: none; display: flex; background: #e7e4dd; overflow: hidden; }
.side { position: relative; z-index: 3; width: 360px; height: 770px; flex: none; background: #f8f5ee; box-shadow: 0 0 40px rgba(0, 0, 0, .2); padding: 63px 24px 0; display: flex; flex-direction: column; gap: 11.900px; }
.side a { height: 42px; flex: none; display: flex; align-items: center; padding-left: 15px; color: #333; font-size: 15.750px; font-weight: 500; }
.side a.on { background: #e7e4dd; }
.side svg { width: 18px; height: 18px; fill: #798400; }
.side span { margin-left: 19.500px; padding-bottom: 1px; }
main { flex: 1; padding: 23px 31px 0 41px; }
.stats { display: flex; gap: 15.500px; margin: 0 8px 0 7px; }
article { flex: 1; height: 195px; padding: 40px 34px 0; background: #dcd9d4; border-radius: 4px; box-shadow: 8px 10px 22px rgba(200, 205, 222, .45); }
article:first-child { border-radius: 28px 4px 4px 28px; }
article:last-child { border-radius: 4px 28px 28px 4px; }
.top { display: flex; justify-content: space-between; }
.top strong { display: block; margin-top: 1px; font-size: 27px; line-height: 20px; font-weight: 700; color: #000; }
.top p { margin: 27px 0 0; font-size: 18px; line-height: 20px; color: #858585; }
.badge { width: 68px; height: 69px; }
.bar { height: 11px; margin-top: 41px; border-radius: 6px; background: #e1e1e1; overflow: hidden; }
.bar i { display: block; height: 11px; background: #959595; }
.reports { margin-top: 35px; height: 530px; border-radius: 22px; background: #dcd9d4; }
.rhead { display: flex; justify-content: space-between; padding: 23px 23px 0 22px; height: 81px; }
h2 { margin: -1px 0 0; font-size: 28.300px; font-weight: 450; line-height: 34px; color: #000; }
button { width: 143px; height: 49px; border: 0; border-radius: 6px; background: #dc8035; color: #fff; font: 400 14.600px Inter, sans-serif; display: flex; align-items: center; justify-content: center; gap: 15px; }
.chart { margin-left: 23px; font: 13.500px "Liberation Sans", sans-serif; fill: #6f767e; }
.legend { fill: #666; }
.scroll { width: 11px; background: #444446; }
.scroll i { display: block; height: 396px; border-radius: 0 0 6px 6px; background: #798400; }
.taskbar { position: relative; z-index: 5; height: 60px; flex: none; border-top: 1px solid #acb2bf; background: linear-gradient(90deg, #e2eef8 0, #e2eef8 360px, #d3e2fa 450px, #d8dcf4 560px, #d3e3fb 780px, #d8dbf0 1040px, #d3e1fa 1200px, #d8daee 1370px, #dfeaf6 1500px, #e1eef8 1600px, #dfeaf8 1920px); display: flex; font-family: "Noto Sans", sans-serif; }
.weather { position: relative; width: 447px; padding: 6px 0 0 24px; display: flex; }
.count { position: absolute; width: 20px; height: 20px; border-radius: 10px; background: #c42b1c; color: #fff; font-size: 14px; line-height: 20px; text-align: center; }
.weather .count { left: 38.500px; top: 7px; }
.wtext { display: flex; flex-direction: column; margin-left: 9px; font-size: 14.700px; line-height: 20px; letter-spacing: -.2px; color: #555; padding-top: 2px; }
.wtext b { font-weight: 400; color: #111; }
.dock { display: flex; align-items: center; width: 1040px; }
.search { width: 273px; height: 39px; margin-left: 17.500px; margin-right: 3px; border-radius: 20px; background: #f2f6fe; border: 1px solid #c9d2e4; border-bottom-color: #a9afba; display: flex; align-items: center; padding: 0 3px 0 13px; overflow: hidden; }
.search span { margin-left: 13px; flex: 1; font-size: 16.500px; letter-spacing: -.3px; color: #5a5a5a; }
.lamps { margin-top: 6px; }
.app { position: relative; flex: none; width: 49px; height: 49px; margin: 0 3px; border-radius: 5px; display: flex; align-items: center; justify-content: center; }
.app.current { background: #eaf0fc; border: 1px solid #cdd7ea; }
.app.current::after, .app.running::after { content: ""; position: absolute; bottom: 0; left: 50%; transform: translateX(-50%); width: 8px; height: 4px; border-radius: 2px; background: #7c818d; }
.app.current::after { width: 20px; background: #0067c0; }
.app .count { left: 25.500px; top: 3px; }
.tray { flex: 1; display: flex; align-items: center; padding-left: 172px; }
.wifi { margin-left: 23px; }
.vol { margin-left: 10px; }
.bat { margin-left: 10px; }
.clock { margin-left: auto; display: flex; flex-direction: column; align-items: flex-end; font-size: 14.900px; line-height: 20px; letter-spacing: -.3px; color: #111; padding-top: 1px; }
.bell { margin: 0 26.500px 0 10px; }
</style>
